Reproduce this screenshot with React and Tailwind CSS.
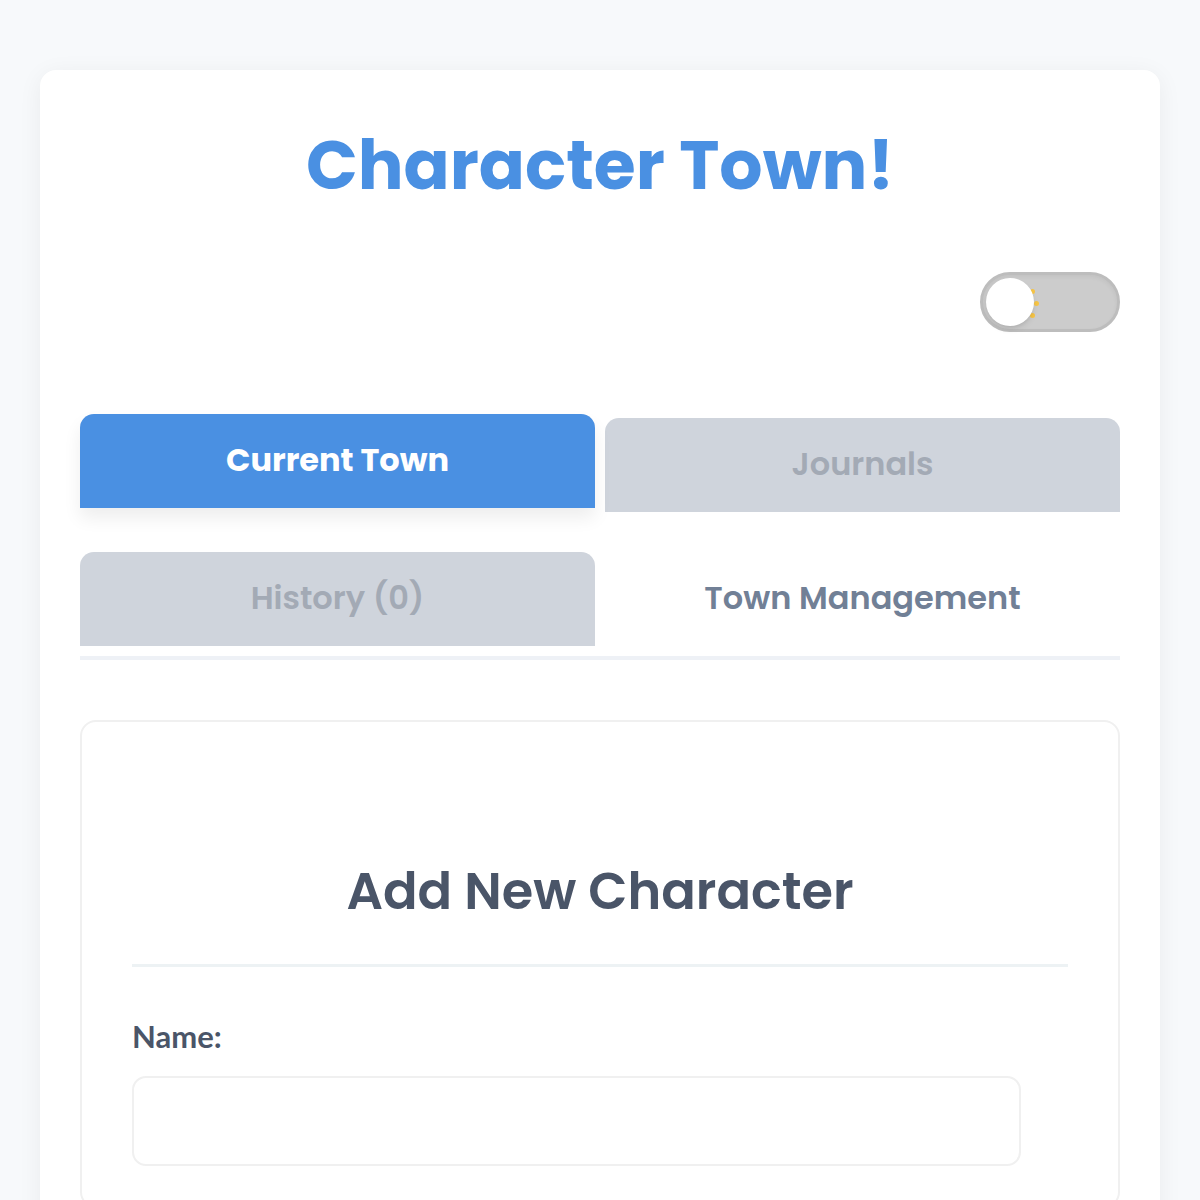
import React, { useState } from "react";

const poppins = "font-['Poppins','Inter','Noto_Sans',sans-serif]";

function ThemeToggle({ dark, onToggle }) {
  return (
    <button
      type="button"
      onClick={onToggle}
      className="relative w-[140px] h-[60px] rounded-full bg-[#cccccc] border-[3px] border-[#bdbdbd] shadow-inner"
    >
      <span className="absolute left-[47px] top-[14px] w-[5px] h-[5px] rounded-full bg-[#f6c445]" />
      <span className="absolute left-[51px] top-[26px] w-[5px] h-[5px] rounded-full bg-[#f6c445]" />
      <span className="absolute left-[47px] top-[38px] w-[5px] h-[5px] rounded-full bg-[#f6c445]" />
      <span
        className={`absolute top-[3px] w-[48px] h-[48px] rounded-full bg-white shadow-md transition-all ${
          dark ? "left-[83px]" : "left-[3px]"
        }`}
      />
    </button>
  );
}

function Tab({ label, active, plain, onClick }) {
  if (plain && !active) {
    return (
      <button
        type="button"
        onClick={onClick}
        className={`${poppins} h-[94px] pb-[3px] text-[32px] font-semibold text-[#718096]`}
      >
        {label}
      </button>
    );
  }
  return (
    <button
      type="button"
      onClick={onClick}
      className={`${poppins} h-[94px] pb-[3px] rounded-t-[14px] text-[32px] ${
        active
          ? "bg-[#4a90e2] text-white font-bold -translate-y-1 shadow-[0_10px_18px_rgba(0,0,0,0.07)]"
          : "bg-[#cfd4dc] text-[#a3aab5] font-semibold"
      }`}
    >
      {label}
    </button>
  );
}

export default function App() {
  const [dark, setDark] = useState(false);
  const [tab, setTab] = useState("current");
  const [name, setName] = useState("");

  return (
    <div className="min-h-screen bg-[#f7f9fb] px-[40px] pt-[70px]">
      <div className="bg-white rounded-t-[16px] shadow-[0_4px_24px_rgba(0,0,0,0.06)] px-[40px] pb-10">
        <h1 className={`${poppins} pt-[48px] text-center text-[68px] leading-[96px] font-bold text-[#4a90e2]`}>
          Character Town!
        </h1>

        <div className="flex justify-end mt-[58px]">
          <ThemeToggle dark={dark} onToggle={() => setDark(!dark)} />
        </div>

        <div className="mt-[86px] grid grid-cols-2 gap-x-[10px] gap-y-[40px]">
          <Tab label="Current Town" active={tab === "current"} onClick={() => setTab("current")} />
          <Tab label="Journals" active={tab === "journals"} onClick={() => setTab("journals")} />
          <Tab label="History (0)" active={tab === "history"} onClick={() => setTab("history")} />
          <Tab label="Town Management" plain active={tab === "manage"} onClick={() => setTab("manage")} />
        </div>
        <div className="mt-[10px] h-[4px] bg-[#eef1f6]" />

        <div className="mt-[60px] rounded-[16px] border-2 border-[#f0f0f0] px-[50px] pb-10">
          <h2 className={`${poppins} mt-[138px] pb-[42px] border-b-[3px] border-[#edf2f4] text-center text-[51px] leading-[62px] font-semibold text-[#4a5568]`}>
            Add New Character
          </h2>

          <label className="block mt-[47px] font-['Lato',sans-serif] font-bold text-[31px] leading-[44px] text-[#4a5568]">
            Name:
          </label>
          <input
            type="text"
            value={name}
            onChange={(e) => setName(e.target.value)}
            className="mt-[18px] w-[95%] h-[90px] rounded-[14px] border-2 border-[#f0f0f0] px-5 text-[24px] outline-none"
          />
        </div>
      </div>
    </div>
  );
}
